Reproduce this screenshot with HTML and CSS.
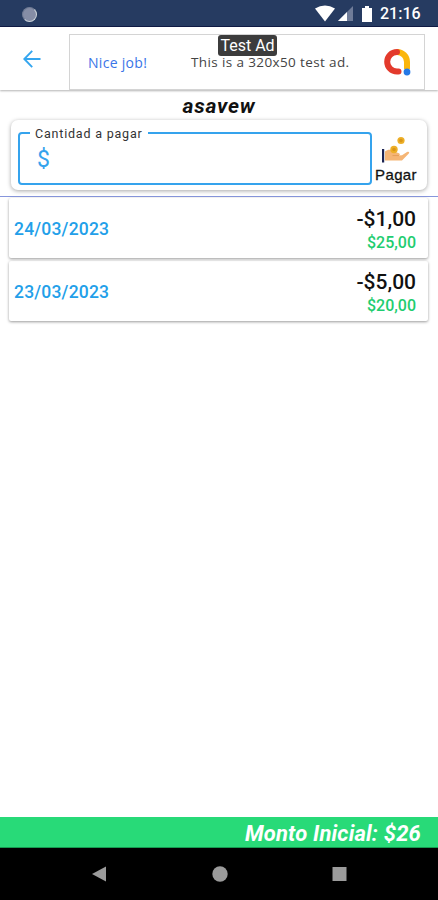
FILE: index.html
```html
<!DOCTYPE html>
<html lang="es">
<head>
  <meta charset="UTF-8" />
  <meta name="viewport" content="width=device-width, initial-scale=1.0"/>
  <title>Pagos</title>
  <link rel="stylesheet" href="styles.css">
</head>
<body>

<div class="status-bar">
  <span class="status-dot"></span>
  <svg class="status-icons" width="60" height="18" viewBox="0 0 60 18">
    <path d="M0 3.5Q10 -2.5 20 3.5L10 16.5Z" fill="#fff"/>
    <path d="M38 1V16H23Z" fill="#6f7c99"/>
    <path d="M32 7V16H23Z" fill="#fff"/>
    <path d="M50 1h4v2h3v14h-10V3h3Z" fill="#fff"/>
  </svg>
  <span class="clock">21:16</span>
</div>

<header class="toolbar">
  <svg class="back" width="18" height="18" viewBox="0 0 18 18" fill="none" stroke="#35a6ef" stroke-width="1.9">
    <path d="M9.2 .8L1.3 9l7.9 8.2M1.3 9H17.5"/>
  </svg>
  <div class="ad">
    <span class="ad-badge">Test Ad</span>
    <span class="ad-link">Nice job!</span>
    <span class="ad-text">This is a 320x50 test ad.</span>
    <svg class="ad-logo" width="28" height="28" viewBox="0 0 28 28" fill="none" stroke-width="6">
      <path d="M14 4A10 10 0 0 1 24 14V21" stroke="#fbb60b"/>
      <path d="M14 4A9.8 9.8 0 0 0 14 23.6H15.5" stroke="#e33a2c" stroke-linecap="round"/>
      <circle cx="24" cy="24" r="3.4" fill="#2579e6"/>
    </svg>
  </div>
</header>

<h1 class="title">asavew</h1>

<section class="pay-card">
  <fieldset class="amount">
    <legend>Cantidad a pagar</legend>
    <span class="currency">$</span>
  </fieldset>
  <div class="pay">
    <svg width="28" height="27" viewBox="0 0 28 27">
      <path d="M3 15.5C6 13 10 13.5 12 15.5L17 17.2C18.5 18 18 19.2 16.5 19.5L20 19.3L25 16C27 15 28 16.5 26.6 17.7L20 24.5H3Z" fill="#f5b575"/>
      <path d="M10.5 19.6H17" stroke="#e69d59" fill="none"/>
      <rect x="0" y="13" width="2.2" height="13.5" fill="#1c2452"/>
      <circle cx="12" cy="13.5" r="3.7" fill="#edaf27"/>
      <circle cx="12" cy="13.5" r="1.8" fill="#d99619"/>
      <circle cx="19" cy="4.5" r="3.6" fill="#edaf27"/>
      <circle cx="19" cy="4.5" r="1.8" fill="#d99619"/>
    </svg>
    <span class="pay-label">Pagar</span>
  </div>
</section>

<main class="list">
  <div class="row">
    <span class="date">24/03/2023</span>
    <div class="values">
      <span class="payment">-$1,00</span>
      <span class="balance">$25,00</span>
    </div>
  </div>
  <div class="row">
    <span class="date">23/03/2023</span>
    <div class="values">
      <span class="payment">-$5,00</span>
      <span class="balance">$20,00</span>
    </div>
  </div>
</main>

<footer class="total">Monto Inicial: $26</footer>

<nav class="nav-bar">
  <svg width="15" height="16" viewBox="0 0 15 16"><path d="M0 8L14 .5V15.5Z" fill="#9b9b9b"/></svg>
  <svg width="16" height="16" viewBox="0 0 16 16"><circle cx="8" cy="8" r="7.7" fill="#9b9b9b"/></svg>
  <svg width="15" height="16" viewBox="0 0 15 16"><path d="M.5 1h14v14H.5Z" fill="#9b9b9b"/></svg>
</nav>

</body>
</html>
```
FILE: styles.css
```css
* {
  box-sizing: border-box;
}

body {
  font-family: Roboto, sans-serif;
  background: #fff;
  color: #111;
  display: flex;
  flex-direction: column;
  height: 100vh;
  margin: 0;
}

svg {
  display: block;
  flex: none;
}

.status-bar {
  display: flex;
  align-items: center;
  height: 27px;
  padding: 2px 17px 0 22px;
  background: #263b61;
  border-bottom: 1px solid #101b46;
}

.status-dot {
  width: 15px;
  height: 15px;
  border-radius: 50%;
  background: #858da6;
  border: 1px solid #707b94;
  border-right-color: #ccd3d9;
  border-bottom-color: #ccd3d9;
}

.status-icons {
  margin-left: auto;
}

.clock {
  width: 41px;
  margin-left: 5px;
  color: #fff;
  font-size: 16px;
  font-weight: 500;
  line-height: 18px;
}

.toolbar {
  display: flex;
  align-items: center;
  height: 63px;
  padding: 0 13px 0 23px;
  box-shadow: 0 1px 2px rgba(0,0,0,0.3);
}

.ad {
  position: relative;
  display: flex;
  align-items: center;
  width: 356px;
  height: 56px;
  margin: 7px 0 0 28px;
  padding: 0 13px 0 18px;
  border: 1px solid #d4d4d4;
  font-family: "Open Sans", sans-serif;
  font-size: 13.5px;
}

.ad-badge {
  position: absolute;
  top: 0;
  left: 148px;
  width: 59px;
  height: 21px;
  border-radius: 3px;
  background: #3c3c3c;
  color: #fff;
  font-family: Roboto, sans-serif;
  font-size: 16px;
  line-height: 22px;
  text-align: center;
  white-space: nowrap;
}

.ad-link {
  width: 103px;
  color: #3975e8;
  font-size: 14px;
  letter-spacing: 0.3px;
}

.ad-text {
  color: #444;
  line-height: 14px;
  letter-spacing: 0.38px;
  white-space: nowrap;
}

.ad-logo {
  margin-left: auto;
}

.title {
  height: 30px;
  margin: 0;
  font-size: 21px;
  font-weight: 700;
  font-style: italic;
  line-height: 32px;
  letter-spacing: 0.8px;
  text-align: center;
}

.pay-card {
  display: flex;
  height: 70px;
  margin: 0 11px 6px;
  padding: 5px 7px;
  border-radius: 7px;
  box-shadow: 0 1px 4px rgba(0,0,0,0.35);
}

.amount {
  width: 355px;
  height: 60px;
  margin: 0;
  padding: 0 17px;
  border: 2px solid #35a3ed;
  border-radius: 4px;
}

.amount legend {
  margin-left: -7px;
  padding: 1px 5px 0;
  color: #333;
  font-size: 12.5px;
  line-height: 15px;
  letter-spacing: 0.8px;
}

.currency {
  display: block;
  color: #35a3ed;
  font-size: 23px;
  line-height: 38px;
}

.pay {
  display: flex;
  flex: none;
  flex-direction: column;
  align-items: center;
  width: 48px;
  padding-top: 11px;
}

.pay-label {
  font-family: "Liberation Sans", sans-serif;
  font-size: 15px;
  line-height: 24px;
  letter-spacing: 0.4px;
  -webkit-text-stroke: 0.3px #111;
}

.list {
  flex: 1;
  display: flex;
  flex-direction: column;
  gap: 3px;
  padding: 1px 10px 0 9px;
  border-top: 1px solid #8796dc;
}

.row {
  display: flex;
  justify-content: space-between;
  align-items: center;
  height: 60px;
  padding: 1px 12px 0 5px;
  border-radius: 2px;
  box-shadow: 0 1px 3px rgba(0,0,0,0.4);
}

.date {
  color: #239fe9;
  font-size: 17.5px;
  font-weight: 500;
  letter-spacing: 0.2px;
}

.values {
  display: flex;
  flex-direction: column;
  align-items: flex-end;
  padding-top: 2px;
  font-weight: 500;
}

.payment {
  font-size: 21px;
  line-height: 26px;
}

.balance {
  color: #1fcd70;
  font-size: 16px;
  line-height: 22px;
}

.total {
  height: 31px;
  padding-right: 17px;
  background: #28da78;
  border-bottom: 1px solid #159a50;
  color: #fff;
  font-size: 22px;
  font-weight: 700;
  font-style: italic;
  line-height: 33px;
  letter-spacing: 0.17px;
  text-align: right;
}

.nav-bar {
  display: flex;
  align-items: flex-start;
  justify-content: space-between;
  height: 52px;
  padding: 18px 91px 0 92px;
  background: #000;
}
```
